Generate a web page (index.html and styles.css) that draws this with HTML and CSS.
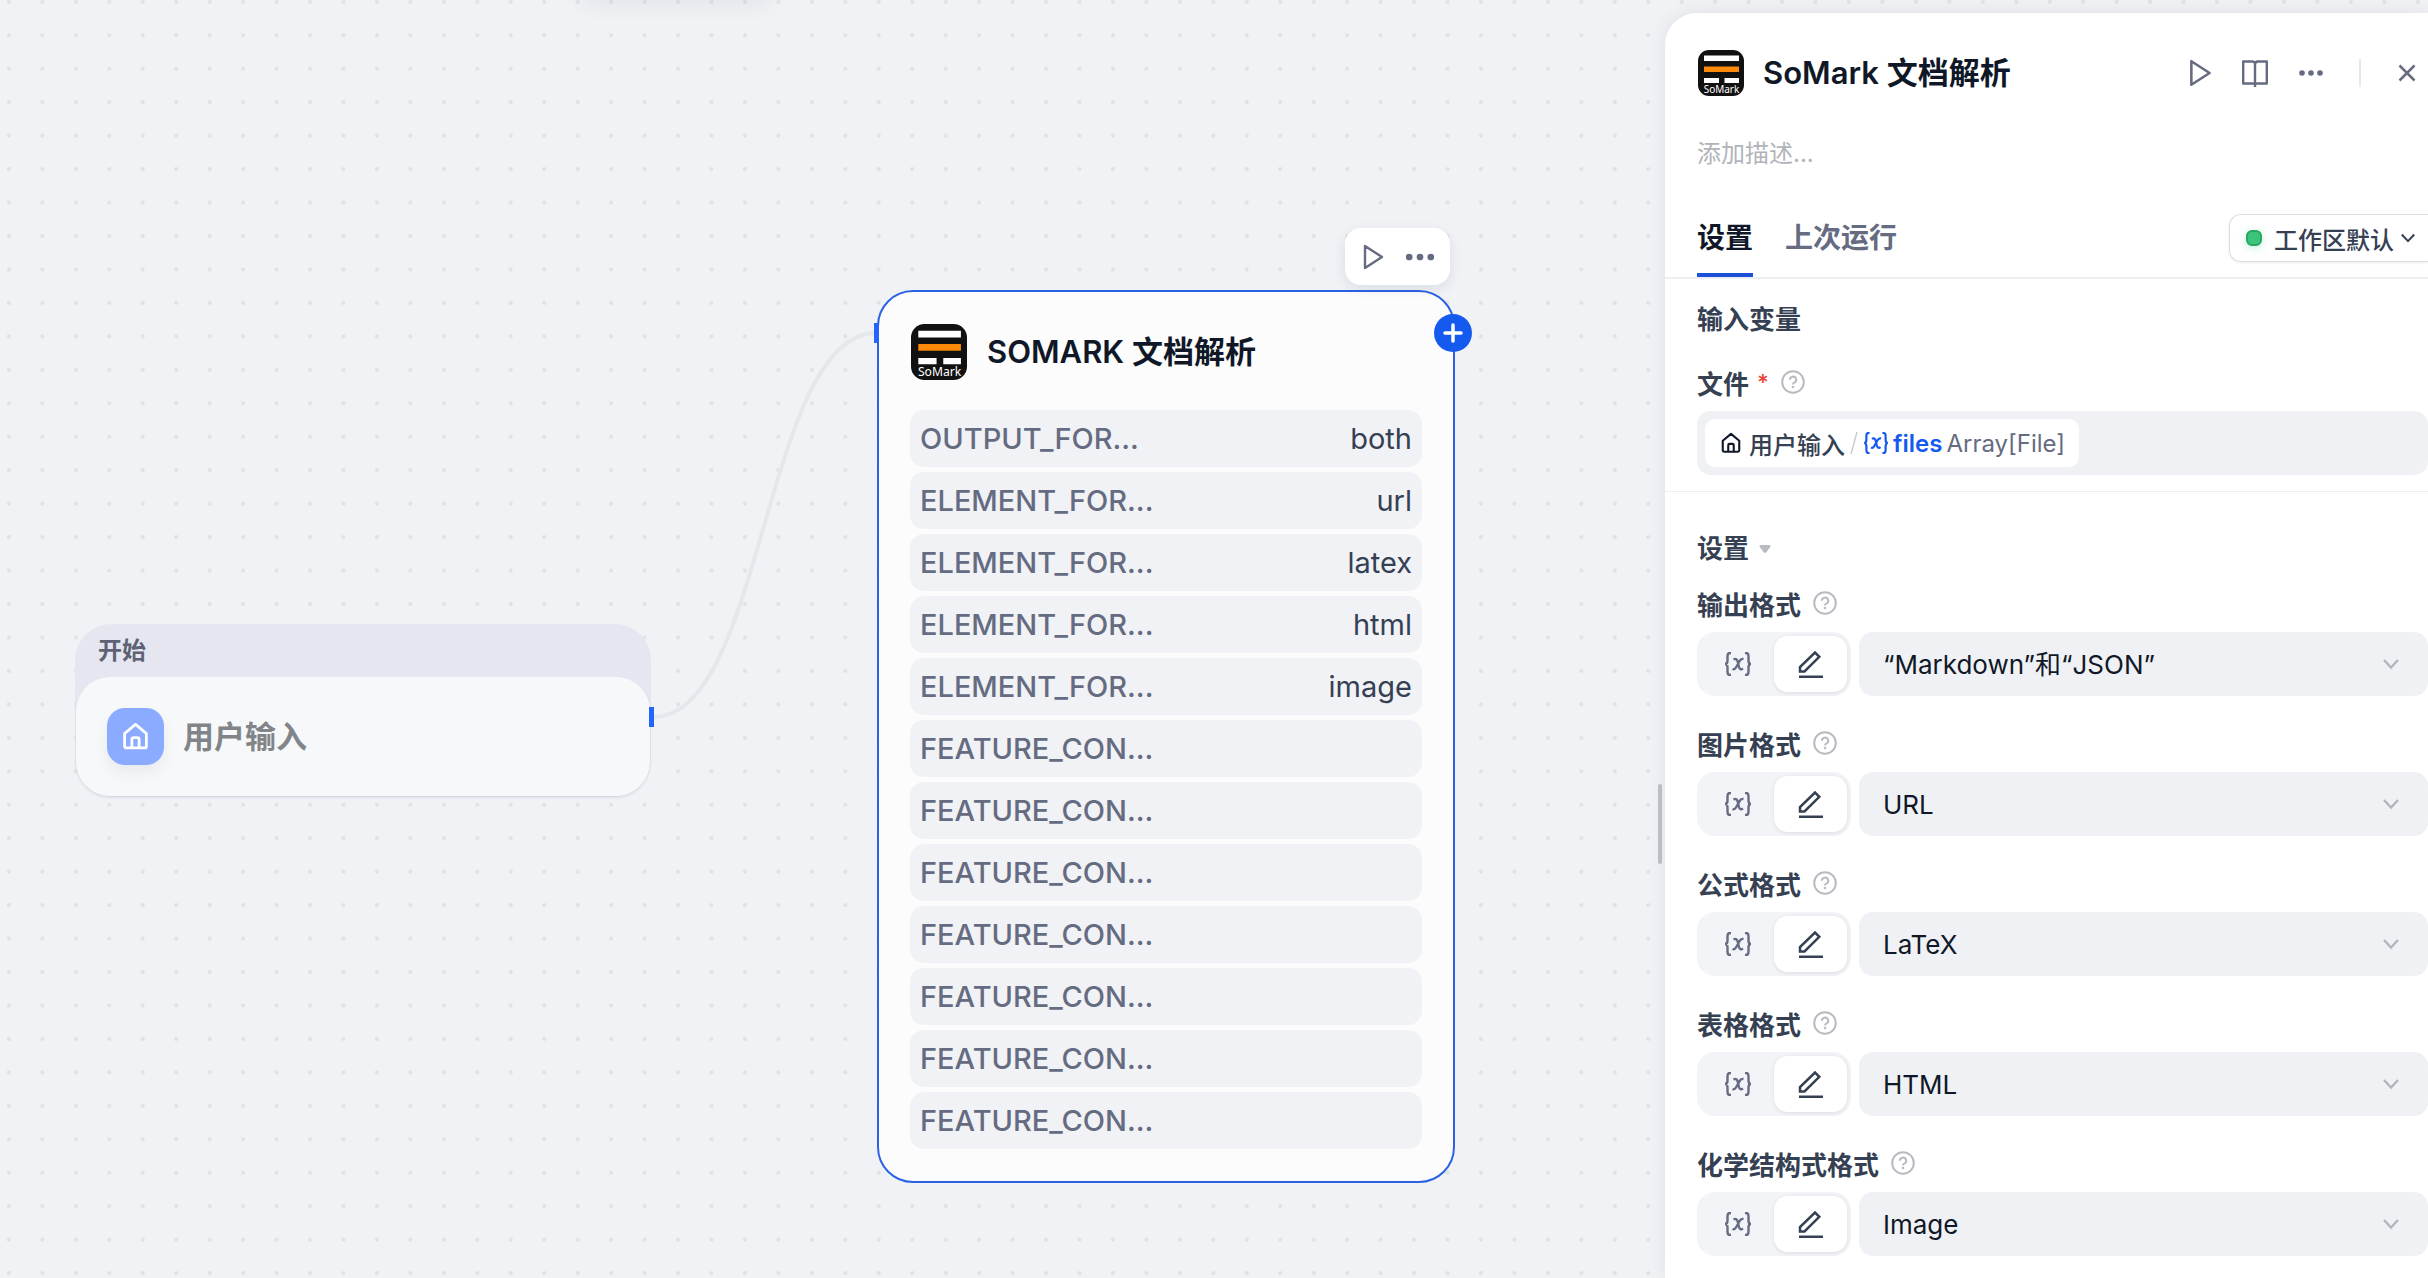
FILE: index.html
```
<!DOCTYPE html>
<html lang="zh-CN">
<head>
  <meta charset="UTF-8" />
  <meta name="viewport" content="width=device-width, initial-scale=1.0" />
  <title>SoMark 文档解析 - 工作流</title>
  <link rel="stylesheet" href="styles.css">
</head>
<body>
  <!-- shared icons -->
  <svg class="sprite" aria-hidden="true">
    <symbol id="home" viewBox="0 0 24 24">
      <path d="M3 9.500 12 2l9 7.500V20a1.500 1.500 0 0 1-1.500 1.500h-15A1.500 1.500 0 0 1 3 20zM9 21v-6.500a1.500 1.500 0 0 1 1.500-1.500h3a1.500 1.500 0 0 1 1.500 1.500V21" fill="none" stroke="currentColor" stroke-width="2.300" stroke-linejoin="round"/>
    </symbol>
    <symbol id="play" viewBox="0 0 24 28">
      <path d="M3 3v22l17-11z" fill="none" stroke="currentColor" stroke-width="2.400" stroke-linejoin="round"/>
    </symbol>
    <symbol id="more" viewBox="0 0 30 30">
      <circle cx="6" cy="15" r="2.800"/><circle cx="15" cy="15" r="2.800"/><circle cx="24" cy="15" r="2.800"/>
    </symbol>
    <symbol id="help" viewBox="0 0 24 24">
      <circle cx="12" cy="12" r="10.800" fill="none" stroke="currentColor" stroke-width="2"/>
      <path d="M8.800 9.800a3.200 3.200 0 1 1 4.600 2.900c-.9.400-1.400.8-1.400 1.700" fill="none" stroke="currentColor" stroke-width="2"/>
      <circle cx="12" cy="17" r="1.300"/>
    </symbol>
    <symbol id="var" viewBox="1 0 28 24">
      <path d="M8 1H7Q4.500 1 4.500 4v4.500Q4.500 12 2 12q2.500 0 2.500 3.500V20q0 3 2.500 3h1M22 1h1q2.500 0 2.500 3v4.500q0 3.500 2.500 3.500-2.500 0-2.500 3.500V20q0 3-2.500 3h-1M10.500 7.500q3-1.500 4 1.500l1.500 6q1 3.500 4 1.500M20.500 7q-2-.5-3.500 1.500l-4 7q-1.500 2.500-3.500 1.500" fill="none" stroke="currentColor" stroke-width="2.400"/>
    </symbol>
    <symbol id="edit" viewBox="0 0 28 28">
      <path d="M3 21.500v-4.500L18 2.500l4.300 4.300L7.500 21.500z" fill="none" stroke="currentColor" stroke-width="2.500"/>
      <path d="M2 25.500h24v2.500H2z"/>
    </symbol>
    <symbol id="chevron" viewBox="0 0 18 12">
      <path d="m2 2 7 7.500L16 2" fill="none" stroke="currentColor" stroke-width="2.300"/>
    </symbol>
  </svg>

  <div class="workspace">
    <svg class="grid-bg" aria-hidden="true">
      <defs>
        <pattern id="dots" x="-7.900" y="-15" width="33.456" height="33.456" patternUnits="userSpaceOnUse">
          <circle cx="16.800" cy="16.800" r="2.100" fill="#dfe1e5"/>
        </pattern>
      </defs>
      <rect width="100%" height="100%" fill="url(#dots)"/>
    </svg>

    <main class="canvas">
      <div class="top-shadow"></div>
      <svg class="edge" aria-hidden="true">
        <path d="M654 717C764 717 764 333 876 333" fill="none" stroke="#e5e8eb" stroke-width="4"/>
      </svg>

      <section class="start-node">
        <div class="start-tag">开始</div>
        <div class="start-card">
          <span class="start-icon"><svg width="29" height="29"><use href="#home"/></svg></span>
          <span class="node-title">用户输入</span>
        </div>
        <span class="port port-out"></span>
      </section>

      <section class="tool-node">
        <header class="tool-head">
          <svg width="56" height="56" viewBox="0 0 46 46">
            <rect width="46" height="46" rx="11" fill="#111"/>
            <path d="M6 5.500h35v5.500H6zM6 28h15v5H6zM26.500 28H41v5H26.500z" fill="#fff"/>
            <path d="M6 16.500h35V22H6z" fill="#ff8a0a"/>
            <text class="logo-text" x="23.500" y="42.500">SoMark</text>
          </svg>
          <h2 class="node-title">SOMARK 文档解析</h2>
        </header>
        <ul class="params">
          <li><span>OUTPUT_FOR...</span><b>both</b></li>
          <li><span>ELEMENT_FOR...</span><b>url</b></li>
          <li><span>ELEMENT_FOR...</span><b>latex</b></li>
          <li><span>ELEMENT_FOR...</span><b>html</b></li>
          <li><span>ELEMENT_FOR...</span><b>image</b></li>
          <li><span>FEATURE_CON...</span></li>
          <li><span>FEATURE_CON...</span></li>
          <li><span>FEATURE_CON...</span></li>
          <li><span>FEATURE_CON...</span></li>
          <li><span>FEATURE_CON...</span></li>
          <li><span>FEATURE_CON...</span></li>
          <li><span>FEATURE_CON...</span></li>
        </ul>
        <span class="port port-in"></span>
        <button class="add-btn" aria-label="添加节点">
          <svg width="20" height="20" viewBox="0 0 20 20"><path d="M10 2v16M2 10h16" stroke="#fff" stroke-width="3.500" stroke-linecap="round"/></svg>
        </button>
        <div class="node-tools">
          <button class="icon-btn" aria-label="运行"><svg width="24" height="28"><use href="#play"/></svg></button>
          <button class="icon-btn" aria-label="更多"><svg width="36" height="36"><use href="#more"/></svg></button>
        </div>
      </section>

      <div class="resize-bar"></div>
    </main>

    <aside class="panel">
      <header class="panel-head">
        <svg width="46" height="46" viewBox="0 0 46 46">
          <rect width="46" height="46" rx="11" fill="#111"/>
          <path d="M6 5.500h35v5.500H6zM6 28h15v5H6zM26.500 28H41v5H26.500z" fill="#fff"/>
          <path d="M6 16.500h35V22H6z" fill="#ff8a0a"/>
          <text class="logo-text" x="23.500" y="42.500">SoMark</text>
        </svg>
        <h1>SoMark 文档解析</h1>
        <div class="actions">
          <button class="icon-btn" aria-label="运行"><svg width="26" height="30"><use href="#play"/></svg></button>
          <button class="icon-btn" aria-label="帮助文档">
            <svg width="28" height="28" viewBox="0 0 28 28"><path d="M14 28V5.500Q14 2.500 11 2.500H2.200v22h23.600v-22H17q-3 0-3 3" fill="none" stroke="currentColor" stroke-width="2.400" stroke-linejoin="round"/></svg>
          </button>
          <button class="icon-btn" aria-label="更多"><svg width="30" height="30"><use href="#more"/></svg></button>
          <span class="divider"></span>
          <button class="icon-btn" aria-label="关闭">
            <svg width="20" height="20" viewBox="0 0 20 20"><path d="m2.500 2.500 15 15m0-15-15 15" stroke="currentColor" stroke-width="2.500"/></svg>
          </button>
        </div>
      </header>

      <input class="desc" type="text" placeholder="添加描述..." aria-label="描述">

      <nav class="tabs">
        <button class="tab active">设置</button>
        <button class="tab">上次运行</button>
        <button class="auth-btn"><i class="dot"></i>工作区默认<svg width="16" height="12"><use href="#chevron"/></svg></button>
      </nav>

      <section class="inputs">
        <h3>输入变量</h3>
        <div class="label-row">文件 <em>*</em><svg class="help" width="24" height="24"><use href="#help"/></svg></div>
        <div class="var-field">
          <button class="chip">
            <svg class="chip-home" width="22" height="22"><use href="#home"/></svg>
            <span>用户输入</span>
            <svg class="slash" width="8" height="24" viewBox="0 0 8 24"><path d="M7 1 1 23" stroke="currentColor" stroke-width="1.500"/></svg>
            <svg class="chip-var" width="26" height="22"><use href="#var"/></svg>
            <strong>files</strong>
            <span class="type">Array[File]</span>
          </button>
        </div>
      </section>

      <section class="settings">
        <h3>设置 <svg class="caret" width="12" height="10" viewBox="0 0 12 10"><path d="M2 1h8q2.500 0 1 2.200L7.300 8.200q-1.300 1.500-2.600 0L1 3.200Q-.5 1 2 1z"/></svg></h3>

        <div class="field">
          <div class="label-row"><label for="output">输出格式</label><svg class="help" width="24" height="24"><use href="#help"/></svg></div>
          <div class="control">
            <div class="mode">
              <button aria-label="变量"><svg width="30" height="24"><use href="#var"/></svg></button>
              <button class="on" aria-label="输入"><svg width="28" height="28"><use href="#edit"/></svg></button>
            </div>
            <div class="select"><select id="output"><option>“Markdown”和“JSON”</option></select><svg width="18" height="12"><use href="#chevron"/></svg></div>
          </div>
        </div>

        <div class="field">
          <div class="label-row"><label for="picture">图片格式</label><svg class="help" width="24" height="24"><use href="#help"/></svg></div>
          <div class="control">
            <div class="mode">
              <button aria-label="变量"><svg width="30" height="24"><use href="#var"/></svg></button>
              <button class="on" aria-label="输入"><svg width="28" height="28"><use href="#edit"/></svg></button>
            </div>
            <div class="select"><select id="picture"><option>URL</option></select><svg width="18" height="12"><use href="#chevron"/></svg></div>
          </div>
        </div>

        <div class="field">
          <div class="label-row"><label for="formula">公式格式</label><svg class="help" width="24" height="24"><use href="#help"/></svg></div>
          <div class="control">
            <div class="mode">
              <button aria-label="变量"><svg width="30" height="24"><use href="#var"/></svg></button>
              <button class="on" aria-label="输入"><svg width="28" height="28"><use href="#edit"/></svg></button>
            </div>
            <div class="select"><select id="formula"><option>LaTeX</option></select><svg width="18" height="12"><use href="#chevron"/></svg></div>
          </div>
        </div>

        <div class="field">
          <div class="label-row"><label for="table">表格格式</label><svg class="help" width="24" height="24"><use href="#help"/></svg></div>
          <div class="control">
            <div class="mode">
              <button aria-label="变量"><svg width="30" height="24"><use href="#var"/></svg></button>
              <button class="on" aria-label="输入"><svg width="28" height="28"><use href="#edit"/></svg></button>
            </div>
            <div class="select"><select id="table"><option>HTML</option></select><svg width="18" height="12"><use href="#chevron"/></svg></div>
          </div>
        </div>

        <div class="field">
          <div class="label-row"><label for="chem">化学结构式格式</label><svg class="help" width="24" height="24"><use href="#help"/></svg></div>
          <div class="control">
            <div class="mode">
              <button aria-label="变量"><svg width="30" height="24"><use href="#var"/></svg></button>
              <button class="on" aria-label="输入"><svg width="28" height="28"><use href="#edit"/></svg></button>
            </div>
            <div class="select"><select id="chem"><option>Image</option></select><svg width="18" height="12"><use href="#chevron"/></svg></div>
          </div>
        </div>
      </section>
    </aside>
  </div>
</body>
</html>
```
FILE: styles.css
```
* { box-sizing: border-box; margin: 0; padding: 0; }
html, body { height: 100%; }
body {
  font-family: Inter, "Noto Sans CJK SC", sans-serif; font-size: 26px;
  color: #354052; background: #f0f2f6; overflow: hidden;
}
button, input, select { font: inherit; color: inherit; border: none; background: none; }
button { cursor: pointer; }
svg { display: block; flex: none; fill: currentColor; }
.sprite { position: absolute; width: 0; height: 0; }
.logo-text { font: 10px "Noto Sans", sans-serif; fill: #fff; text-anchor: middle; }

.workspace { position: relative; display: flex; height: 100%; }
.grid-bg { position: absolute; inset: 0; width: 100%; height: 100%; }
.canvas { position: relative; flex: 1; min-width: 0; }
.edge { position: absolute; inset: 0; width: 100%; height: 100%; }
.top-shadow {
  position: absolute; left: 580px; top: -24px; width: 190px; height: 20px;
  box-shadow: 0 6px 24px rgba(16,24,40,0.08);
}

/* nodes */
.node-title { font-size: 31px; font-weight: 600; line-height: 40px; white-space: nowrap; }
.start-node {
  position: absolute; left: 75px; top: 624px; width: 576px;
  background: #e5e6ef; border-radius: 36px; padding: 0 1px 1px;
}
.start-tag {
  padding: 8px 22px 8px; font-size: 24px; font-weight: 600;
  line-height: 37px; color: #5d6276;
}
.start-card {
  display: flex; align-items: center; gap: 19px; height: 119px; padding: 0 31px;
  background: #f6f8fa; border-radius: 34px; color: #818589;
  box-shadow: 0 2px 3px rgba(16,24,40,0.08);
}
.start-icon {
  display: grid; place-items: center; width: 57px; height: 57px;
  background: #8aabff; color: #fff; border-radius: 18px;
  box-shadow: 0 8px 16px rgba(16,24,40,0.06);
}
.port { position: absolute; width: 5px; height: 20px; background: #2563ff; }
.port-out { right: -3px; top: 83px; }
.port-in { left: -5px; top: 31px; }

.tool-node {
  position: absolute; left: 877px; top: 290px; width: 578px; padding: 32px;
  background: #fcfcfd; border: 2px solid #2b62e3; border-radius: 36px;
}
.tool-head { display: flex; align-items: center; gap: 20px; color: #101828; }
.params { list-style: none; display: grid; gap: 5px; margin: 30px -1px 0; }
.params li {
  display: flex; justify-content: space-between; align-items: center;
  height: 57px; padding: 0 10px; background: #f0f2f6; border-radius: 14px;
  font-size: 29px; color: #656b80;
}
.params span { font-weight: 500; }
.params b { font-weight: 400; color: #354052; }
.add-btn {
  position: absolute; right: -19px; top: 22px; width: 38px; height: 38px;
  display: grid; place-items: center; background: #155aef; border-radius: 50%;
}
.node-tools {
  position: absolute; right: 3px; top: -64px; height: 57px; padding: 0 12px 0 17px;
  display: flex; align-items: center; gap: 16px; background: #fff;
  border-radius: 16px; box-shadow: 0 4px 14px rgba(16,24,40,0.09);
}
.icon-btn { display: grid; place-items: center; color: #656b80; }
.resize-bar {
  position: absolute; right: 3px; top: 50%; width: 4px; height: 80px; margin-top: 145px;
  background: #bfc2c8; border-radius: 2px;
}

/* side panel */
.panel {
  position: relative; flex: 0 0 763px; margin-top: 13px; background: #fff;
  border-radius: 32px 0 0 0; box-shadow: 0 0 20px rgba(16,24,40,0.08);
}
.panel-head { display: flex; align-items: center; padding: 37px 11px 0 33px; }
.panel-head h1 { margin-left: 19px; font-size: 31px; font-weight: 600; line-height: 46px; color: #101828; }
.actions { display: flex; align-items: center; gap: 27px; margin-left: auto; }
.divider { width: 2px; height: 28px; margin: 0 9px 0 6px; background: #e6e8ec; }
.desc {
  display: block; width: 100%; height: 40px; margin-top: 37px; padding: 0 32px;
  font-size: 24px; outline: none;
}
.desc::placeholder { color: #b1b4b9; }

.tabs {
  display: flex; align-items: center; gap: 32px; height: 80px; margin-top: 26px;
  padding-left: 32px; border-bottom: 2px solid #eceef1;
}
.tab {
  height: 78px; font-size: 28px; font-weight: 600; color: #656b80;
  border-bottom: 4px solid transparent;
}
.tab.active { color: #101828; border-bottom-color: #1d50d8; }
.auth-btn {
  display: flex; align-items: center; height: 48px; margin-left: auto; padding: 0 12px 0 16px;
  border: 1px solid #d9dce2; border-right: none; border-radius: 12px 0 0 12px;
  box-shadow: 0 1px 3px rgba(16,24,40,0.08); font-size: 24px; font-weight: 500;
}
.auth-btn svg { margin-left: 6px; }
.dot {
  width: 16px; height: 16px; margin-right: 12px; background: #3cc47c;
  border: 2px solid #26a862; border-radius: 6px; box-shadow: 0 2px 8px rgba(60,196,124,0.3);
}

h3 { font-size: 26px; font-weight: 600; line-height: 40px; }
.inputs { padding: 21px 0 16px 32px; border-bottom: 1px solid #eceef1; }
.label-row {
  display: flex; align-items: center; height: 40px; font-weight: 600;
}
.label-row em { margin-left: 8px; font-style: normal; font-size: 22px; line-height: 24px; color: #f04438; }
.help { margin-left: 12px; color: #b8bbc1; }
.inputs .label-row { margin-top: 22px; }
.var-field {
  display: flex; align-items: center; height: 64px; margin-top: 9px; padding: 0 8px;
  background: #eff1f4; border-radius: 14px;
}
.chip {
  display: flex; align-items: center; height: 48px; padding: 0 14px 0 15px;
  background: #fff; border-radius: 10px; font-size: 24px; font-weight: 500;
}
.chip-home { color: #101828; margin-right: 7px; }
.slash { margin: 0 5px; color: #c9ccd2; }
.chip strong { margin: 0 4px; font-weight: 600; }
.chip-var, .chip strong { color: #155aef; }
.type { font-weight: 400; color: #656b80; }

.settings { padding: 37px 0 0 32px; }
.settings h3 { display: flex; align-items: center; gap: 10px; }
.caret { color: #b8bbc1; }
.field { margin-top: 27px; }
h3 + .field { margin-top: 14px; }
.control { display: flex; gap: 8px; margin-top: 9px; }
.mode {
  display: flex; width: 154px; height: 64px; padding: 4px;
  background: #f3f4f7; border-radius: 18px;
}
.mode button {
  display: grid; place-items: center; flex: 1; border-radius: 14px; color: #656b80;
}
.mode .on { background: #fff; color: #354052; box-shadow: 0 1px 4px rgba(16,24,40,0.1); }
.select { flex: 1; display: grid; align-items: center; color: #b1b4b9; }
.select select, .select svg { grid-area: 1 / 1; }
.select select {
  appearance: none; width: 100%; height: 64px; padding: 0 60px 0 24px;
  background: #eff1f4; border-radius: 14px; color: #101828; outline: none;
}
.select svg { justify-self: end; margin-right: 28px; pointer-events: none; }
```
